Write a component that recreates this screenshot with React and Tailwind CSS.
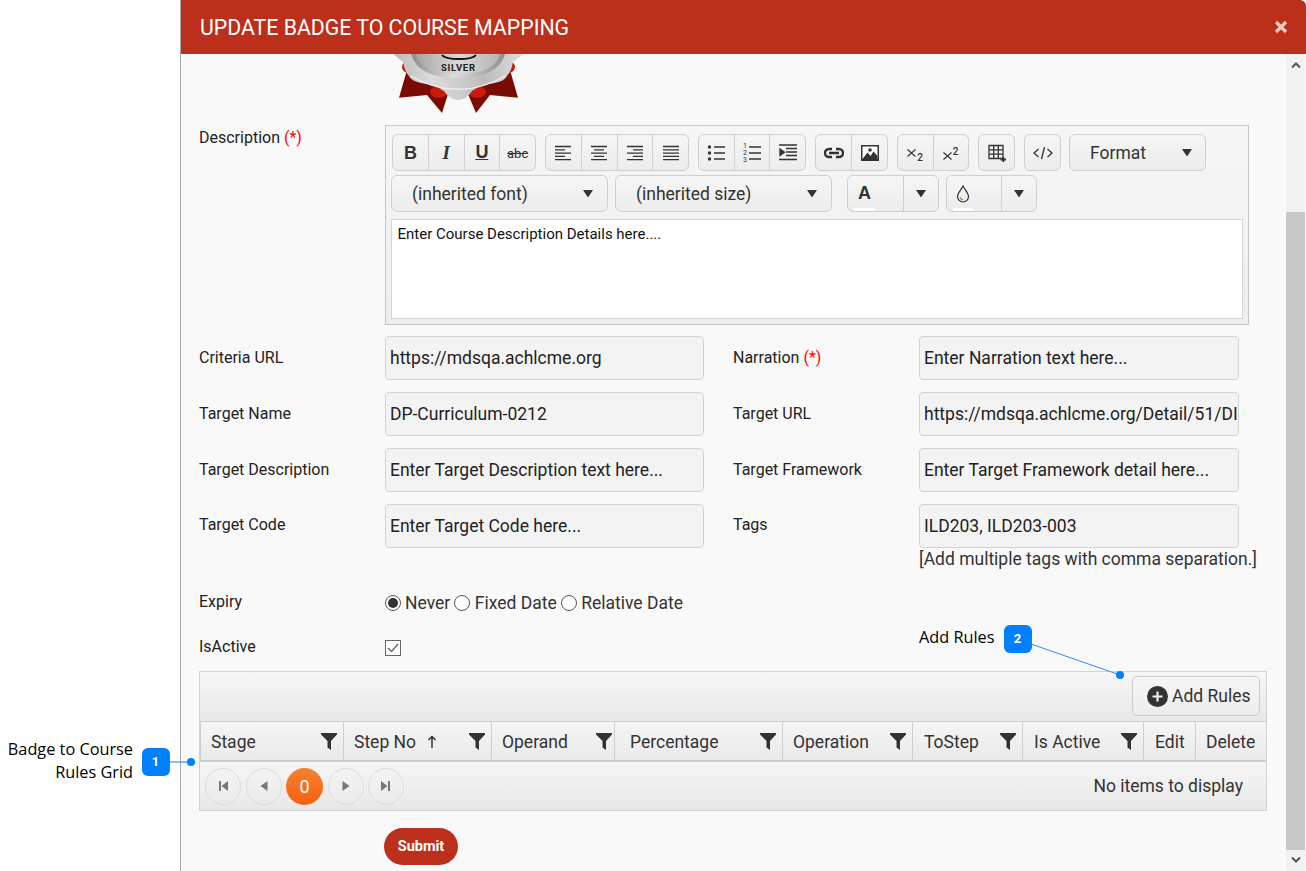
import React from "react";

const Ico = ({ children, w = 18, h = 18, vb = "0 0 18 18" }) => (
  <svg width={w} height={h} viewBox={vb} fill="none" stroke="#333" strokeWidth="1.3">{children}</svg>
);
const Lines = ({ rows }) => (
  <Ico>
    {rows.map(([a, b], i) => (
      <path key={i} d={`M${a} ${2.5 + i * 3.3}H${b}`} />
    ))}
  </Ico>
);
const Caret = ({ s = 10 }) => (
  <svg width={s} height={s * 0.75} viewBox="0 0 12 9"><path d="M0 0H12L6 9Z" fill="#333" /></svg>
);
const Funnel = () => (
  <svg width="16" height="17" viewBox="0 0 16 17"><path d="M0 0H16V1.5L10 8V17L6.5 14.5V8L0 1.5Z" fill="#333" /></svg>
);

const Btn = ({ children, last }) => (
  <div className={`flex-1 h-full flex items-center justify-center ${last ? "" : "border-r border-[#d0d0d0]"}`}>{children}</div>
);
const Group = ({ children, w }) => (
  <div className={`${w} shrink-0 flex h-[37px] rounded-[6px] border border-[#cfcfcf] bg-linear-to-b from-[#f6f6f6] to-[#ececec] overflow-hidden`}>{children}</div>
);
const Select = ({ label, w }) => (
  <div className={`${w} h-[37px] flex items-center justify-between pl-5 pr-[14px] rounded-[6px] border border-[#cfcfcf] bg-linear-to-b from-[#f6f6f6] to-[#ececec] text-[17.5px] text-[#333]`}>
    <span className="pt-[1px]">{label}</span>
    <Caret />
  </div>
);
const Field = ({ value, w = "w-[319px]" }) => (
  <div className={`${w} h-[44px] flex items-center px-1 rounded-[4px] border border-[#d2d2d2] bg-[#f4f3f3] text-[17.5px] text-[#222] overflow-hidden whitespace-nowrap`}>{value}</div>
);
const Row = ({ a, av, b, bv, pt = "pt-[12px]" }) => (
  <div className="flex items-start">
    <div className={`w-[186px] ${pt} text-[16px] leading-[20px] text-[#222]`}>{a}</div>
    <Field value={av} />
    <div className={`w-[186px] ml-[29px] ${pt} text-[16px] leading-[20px] text-[#222]`}>{b}</div>
    <Field value={bv} w="w-[320px]" />
  </div>
);
const Radio = ({ on }) => (
  <span className="w-4 h-4 rounded-full border border-[#555] bg-white flex items-center justify-center shrink-0">
    {on && <span className="w-[10px] h-[10px] rounded-full bg-[#333]" />}
  </span>
);
const Th = ({ w, label, funnel, arrow, pl = "pl-[10px]", pr = "pr-[6px]" }) => (
  <div className={`${w} h-full shrink-0 flex items-center justify-between ${pl} ${pr} border-r border-[#cdcdcd] text-[17.5px] text-[#333]`}>
    <span className="flex items-center gap-[11px] pt-[3px]">
      {label}
      {arrow && (
        <svg width="10" height="13" viewBox="0 0 10 13" fill="none" stroke="#333" strokeWidth="1.5" className="-mt-[2px]"><path d="M5 13V1.5M1.5 5L5 1.500L8.500 5" /></svg>
      )}
    </span>
    {funnel && <Funnel />}
  </div>
);
const Page = ({ d, text, orange }) => (
  <div className={`h-[37px] rounded-full flex items-center justify-center ${orange ? "bg-linear-to-b from-[#f5802f] to-[#f65f0a] text-white text-[18px] w-[37px]" : "w-[36px] border border-[#dcdcdc]"}`}>
    {text ?? <svg width="12" height="12" viewBox="0 0 12 12" fill="#777"><path d={d} /></svg>}
  </div>
);
const Callout = ({ n, cls }) => (
  <div className={`absolute w-[28px] h-[28px] rounded-[6px] bg-[#0080ff] text-white text-[13px] font-bold flex items-center justify-center ${cls}`}>{n}</div>
);

export default function App() {
  return (
    <div className="relative w-[1306px] h-[871px] overflow-hidden flex bg-white" style={{ fontFamily: '"Roboto", sans-serif' }}>
      <div className="w-[180px] shrink-0 border-r border-[#aaaaaa] box-content" />
      <div className="flex-1 flex flex-col min-w-0">
        <div className="h-[54px] shrink-0 bg-[#bc2f1b] rounded-tr-[6px] flex items-center justify-between pl-[19px] pr-[18px] text-white">
          <span className="text-[21.3px] font-normal pt-[1px]">UPDATE BADGE TO COURSE MAPPING</span>
          <svg width="14" height="14" viewBox="0 0 14 14" stroke="#f3c9c2" strokeWidth="3.200"><path d="M2 2L12 12M12 2L2 12" /></svg>
        </div>
        <div className="flex-1 flex min-h-0">
          <div className="flex-1 bg-[#f9f9f9] pl-[18px] min-w-0">
            <div className="h-[59px] ml-[186px] relative">
              <svg width="140" height="59" viewBox="385 54 140 59" className="block">
                <defs>
                  <linearGradient id="sv" x1="0" y1="0" x2="1" y2="0">
                    <stop offset="0" stopColor="#b9b9b9" />
                    <stop offset="0.3" stopColor="#dcdcdc" />
                    <stop offset="0.7" stopColor="#bdbdbd" />
                    <stop offset="1" stopColor="#dedede" />
                  </linearGradient>
                  <linearGradient id="sv2" x1="0" y1="0" x2="1" y2="0">
                    <stop offset="0" stopColor="#8c8c8c" />
                    <stop offset="0.45" stopColor="#dedede" />
                    <stop offset="1" stopColor="#8f8f8f" />
                  </linearGradient>
                  <linearGradient id="sv3" x1="0" y1="0" x2="1" y2="0">
                    <stop offset="0" stopColor="#a6a6a6" />
                    <stop offset="0.5" stopColor="#d9d9d9" />
                    <stop offset="1" stopColor="#b5b5b5" />
                  </linearGradient>
                </defs>
                <path d="M407 70L399 97.700L427 95L442 113L448 94H468L476 113L490 95L518 97.700L510 70Z" fill="#7a0a02" />
                <circle cx="407.500" cy="67" r="5.500" fill="#c91a0a" />
                <circle cx="509.500" cy="67" r="5.500" fill="#c91a0a" />
                <ellipse cx="439" cy="92" rx="9" ry="6" fill="#c91a0a" />
                <ellipse cx="477" cy="92" rx="9" ry="6" fill="#c91a0a" />
                <path d="M393 54H524L513 62Q511 72 507 76Q505 81 495 83Q480 85 472 91Q466 100 458 100Q450 100 444 91Q436 85 421 83Q411 81 409 76Q405 72 403 62Z" fill="url(#sv)" />
                <path d="M411 76Q435 90 458 89Q481 90 505 76" fill="none" stroke="#f2f2f2" strokeWidth="1.200" />
                <path d="M411 54H505Q498 78 458 78Q418 78 411 54Z" fill="url(#sv2)" />
                <path d="M416 54H500Q494 74 458 74Q422 74 416 54Z" fill="url(#sv3)" />
                <path d="M442 55Q445 59 459 59Q473 59 476 55" fill="none" stroke="#111" strokeWidth="2" />
              </svg>
              <span className="absolute left-[56px] top-[8px] text-[9.500px] font-bold leading-[12px] tracking-[0.7px] text-[#222]">SILVER</span>
            </div>

            <div className="flex mt-[12px]">
              <div className="w-[186px] pt-[3px] text-[16px] leading-[20px] text-[#222]">Description <span className="text-[#f00]">(*)</span></div>
              <div className="w-[864px] h-[200px] border border-[#c5c5c5] bg-linear-to-b from-[#f6f6f6] to-[#eeeeee] px-[5px] pt-2">
                <div className="flex items-center gap-[9px] pl-[1px] h-[37px]">
                  <Group w="w-[144px]">
                    <Btn><span className="font-bold text-[18px] mt-[2px] text-[#333]" style={{ fontFamily: '"Liberation Sans", sans-serif' }}>B</span></Btn>
                    <Btn><span className="italic font-bold text-[19px] mt-[2px] text-[#333]" style={{ fontFamily: '"Liberation Serif", serif' }}>I</span></Btn>
                    <Btn><span className="underline font-bold text-[18px] text-[#333]" style={{ fontFamily: '"Liberation Sans", sans-serif' }}>U</span></Btn>
                    <Btn last><span className="line-through text-[13px] mt-[3px] text-[#333]">abc</span></Btn>
                  </Group>
                  <Group w="w-[144px]">
                    <Btn><Lines rows={[[1, 17], [1, 11], [1, 17], [1, 11], [1, 17]]} /></Btn>
                    <Btn><Lines rows={[[1, 17], [4, 14], [1, 17], [4, 14], [1, 17]]} /></Btn>
                    <Btn><Lines rows={[[1, 17], [7, 17], [1, 17], [7, 17], [1, 17]]} /></Btn>
                    <Btn last><Lines rows={[[1, 17], [1, 17], [1, 17], [1, 17], [1, 17]]} /></Btn>
                  </Group>
                  <Group w="w-[108px]">
                    <Btn>
                      <Ico>
                        <circle cx="2.500" cy="3" r="1.700" fill="#333" stroke="none" />
                        <circle cx="2.500" cy="9" r="1.700" fill="#333" stroke="none" />
                        <circle cx="2.500" cy="15" r="1.700" fill="#333" stroke="none" />
                        <path d="M7 3H18M7 9H18M7 15H18" />
                      </Ico>
                    </Btn>
                    <Btn>
                      <div className="relative w-[18px] h-[18px]">
                        <span className="absolute left-0 top-[-2px] text-[7px] leading-[8px] text-[#333]">1</span>
                        <span className="absolute left-0 top-[5px] text-[7px] leading-[8px] text-[#333]">2</span>
                        <span className="absolute left-0 top-[12px] text-[7px] leading-[8px] text-[#333]">3</span>
                        <Ico><path d="M6 3H18M6 9H18M6 15H18" /></Ico>
                      </div>
                    </Btn>
                    <Btn last>
                      <Ico>
                        <path d="M0 1H18M7 4.500H18M7 8H18M7 11.500H18M0 15.500H18" />
                        <path d="M1 5L5.500 8.200L1 11.500Z" fill="#333" />
                      </Ico>
                    </Btn>
                  </Group>
                  <Group w="w-[73px]">
                    <Btn>
                      <svg width="20" height="12" viewBox="0 0 20 12" fill="none" stroke="#333" strokeWidth="2.400"><path d="M8 2H5a4 4 0 0 0 0 8h3M12 2h3a4 4 0 0 1 0 8h-3M5 6H15" /></svg>
                    </Btn>
                    <Btn last>
                      <svg width="18" height="16" viewBox="0 0 18 16"><path d="M0 0H18V16H0Z" fill="#333" /><path d="M1.500 1.500H16.500V14H1.500Z" fill="#fff" /><path d="M1.500 14L6.500 7.500L9.500 11L12.500 6.500L16.500 11V14Z" fill="#333" /><circle cx="9" cy="5" r="1.800" fill="#333" /></svg>
                    </Btn>
                  </Group>
                  <Group w="w-[72px]">
                    <Btn>
                      <div className="relative w-[16px] h-[14px] mt-[6px]">
                        <svg width="9" height="8" viewBox="0 0 9 8" fill="none" stroke="#333" strokeWidth="1.100" className="absolute left-0 top-0"><path d="M.5 .5L8.500 7.500M8.500 .5L.5 7.500" /></svg>
                        <span className="absolute left-[10px] top-[4px] text-[10px] leading-[10px] font-medium text-[#333]">2</span>
                      </div>
                    </Btn>
                    <Btn last>
                      <div className="relative w-[16px] h-[14px] mt-[2px]">
                        <svg width="9" height="8" viewBox="0 0 9 8" fill="none" stroke="#333" strokeWidth="1.100" className="absolute left-0 top-[5px]"><path d="M.5 .5L8.500 7.500M8.500 .5L.5 7.500" /></svg>
                        <span className="absolute left-[10px] top-0 text-[10px] leading-[10px] font-medium text-[#333]">2</span>
                      </div>
                    </Btn>
                  </Group>
                  <Group w="w-[37px]">
                    <Btn last>
                      <Ico>
                        <path d="M1 1.500H15V14.500H1ZM1 5.800H15M1 10.100H15M5.700 1.500V14.500M10.300 1.500V14.500" />
                        <path d="M12.500 15.500H18M15.300 13V18" strokeWidth="1.800" />
                      </Ico>
                    </Btn>
                  </Group>
                  <Group w="w-[37px]">
                    <Btn last>
                      <svg width="20" height="14" viewBox="0 0 20 14" fill="none" stroke="#333" strokeWidth="1.300"><path d="M5.500 3L1 7L5.500 11M14.500 3L19 7L14.500 11M11.500 1L8.500 13" /></svg>
                    </Btn>
                  </Group>
                  <div className="ml-[-1px] w-[137px] h-[37px] flex items-center justify-between pl-5 pr-[13px] rounded-[6px] border border-[#cfcfcf] bg-linear-to-b from-[#f6f6f6] to-[#ececec] text-[17.5px] text-[#333]">
                    <span className="pt-[1px]">Format</span>
                    <Caret />
                  </div>
                </div>
                <div className="flex items-center mt-1 h-[37px]">
                  <Select label="(inherited font)" w="w-[217px]" />
                  <div className="w-[7px]" />
                  <Select label="(inherited size)" w="w-[217px]" />
                  <div className="w-[15px]" />
                  <div className="flex h-[37px] w-[92px] rounded-[6px] border border-[#cfcfcf] bg-linear-to-b from-[#f6f6f6] to-[#ececec] overflow-hidden">
                    <div className="relative w-[56px] border-r border-[#cfcfcf] flex items-center pl-[10px]">
                      <span className="font-bold text-[18px] text-[#333]" style={{ fontFamily: '"Liberation Sans", sans-serif' }}>A</span>
                      <span className="absolute left-[6px] bottom-0 w-5 h-[3px] bg-white" />
                    </div>
                    <div className="flex-1 flex items-center justify-center"><Caret /></div>
                  </div>
                  <div className="w-[7px]" />
                  <div className="flex h-[37px] w-[91px] rounded-[6px] border border-[#cfcfcf] bg-linear-to-b from-[#f6f6f6] to-[#ececec] overflow-hidden">
                    <div className="relative w-[55px] border-r border-[#cfcfcf] flex items-center pl-[9px]">
                      <svg width="14" height="18" viewBox="0 0 14 18" fill="none" stroke="#333" strokeWidth="1.200"><path d="M7 1C5 5 1.500 8 1.500 11.500a5.500 5.500 0 0 0 11 0C12.500 8 9 5 7 1Z" /><path d="M4 12.500q1 2 3 2.500" stroke="#a8672a" /></svg>
                      <span className="absolute left-[6px] bottom-0 w-5 h-[3px] bg-white" />
                    </div>
                    <div className="flex-1 flex items-center justify-center"><Caret /></div>
                  </div>
                </div>
                <div className="mt-[7px] w-[852px] h-[100px] bg-white border border-[#d6d6d6] px-[5.5px] pt-[4px] text-[15px] leading-[20px] text-[#111]">Enter Course Description Details here....</div>
              </div>
            </div>

            <div className="flex flex-col gap-3 mt-[11px]">
              <Row a="Criteria URL" av="https://mdsqa.achlcme.org" b={<>Narration <span className="text-[#f00]">(*)</span></>} bv="Enter Narration text here..." />
              <Row a="Target Name" av="DP-Curriculum-0212" b="Target URL" bv="https://mdsqa.achlcme.org/Detail/51/DI" />
              <Row a="Target Description" av="Enter Target Description text here..." b="Target Framework" bv="Enter Target Framework detail here..." />
              <Row a="Target Code" av="Enter Target Code here..." b="Tags" bv="ILD203, ILD203-003" pt="pt-[11px]" />
            </div>
            <div className="ml-[720px] h-[22px] text-[17.500px] leading-[22px] text-[#333] whitespace-nowrap">[Add multiple tags with comma separation.]</div>

            <div className="flex items-center h-6 mt-[21px]">
              <div className="w-[186px] text-[16px] text-[#222] -mt-[2px]">Expiry</div>
              <div className="flex items-center text-[17.500px] text-[#333]">
                <Radio on />
                <span className="ml-1 mr-[4px]">Never</span>
                <Radio />
                <span className="ml-[4.5px] mr-[4px]">Fixed Date</span>
                <Radio />
                <span className="ml-[4.500px]">Relative Date</span>
              </div>
            </div>
            <div className="flex items-center h-6 mt-[21px]">
              <div className="w-[186px] text-[16px] text-[#222] -mt-[3px]">IsActive</div>
              <span className="w-4 h-4 border border-[#666] bg-white flex items-center justify-center">
                <svg width="12" height="10" viewBox="0 0 12 10" fill="none" stroke="#666" strokeWidth="1.400"><path d="M1 5L4.500 8.500L11 1" /></svg>
              </span>
            </div>

            <div className="mt-[11px] w-[1068px] border border-[#d3d3d3]">
              <div className="h-[49px] flex items-start justify-end pt-[4px] pr-[6px] bg-linear-to-b from-[#f6f6f6] to-[#e9e8e8]">
                <div className="w-[128px] h-[40px] flex items-center gap-[4px] pl-[14px] rounded-[5px] border border-[#cdcdcd] bg-linear-to-b from-[#f6f6f6] to-[#ececec] text-[17.500px] text-[#333]">
                  <svg width="21" height="21" viewBox="0 0 21 21"><circle cx="10.500" cy="10.500" r="10.500" fill="#333" /><path d="M10.500 5.500V15.500M5.500 10.500H15.500" stroke="#eee" strokeWidth="2.200" /></svg>
                  Add Rules
                </div>
              </div>
              <div className="h-[41px] flex border-y border-[#cdcdcd] border-b-[2px] bg-linear-to-b from-[#f5f5f5] to-[#ebeaea]">
                <div className="h-full border-l border-[#cdcdcd]" />
                <Th w="w-[143px]" label="Stage" funnel />
                <Th w="w-[148px]" label="Step No" funnel arrow />
                <Th w="w-[123px]" pr="pr-[2px]" label="Operand" funnel />
                <Th w="w-[168px]" pl="pl-[15px]" label="Percentage" funnel />
                <Th w="w-[130px]" label="Operation" funnel />
                <Th w="w-[110px]" pl="pl-[11px]" label="ToStep" funnel />
                <Th w="w-[121px]" pl="pl-[11px]" label="Is Active" funnel />
                <Th w="w-[52px]" pl="pl-[11px]" label="Edit" />
                <div className="flex-1 flex items-center pl-[10px] pt-[3px] text-[17.500px] text-[#333]">Delete</div>
              </div>
              <div className="h-[48px] flex items-center justify-between pl-[5px] pr-[23px] bg-linear-to-b from-[#f6f6f6] to-[#e9e8e8]">
                <div className="flex items-center gap-[4.5px]">
                  <Page d="M2 1H4V11H2ZM11 1V11L4.500 6Z" />
                  <Page d="M9.500 1V11L2.500 6Z" />
                  <Page text="0" orange />
                  <Page d="M2.500 1V11L9.500 6Z" />
                  <Page d="M8 1H10V11H8ZM1 1V11L7.500 6Z" />
                </div>
                <span className="text-[17.500px] text-[#333]">No items to display</span>
              </div>
            </div>

            <div className="ml-[185px] mt-[17px] w-[74px] h-[37px] rounded-full bg-[#bc2f1b] text-white text-[14.500px] font-bold flex items-center justify-center">Submit</div>
          </div>
          <div className="w-[20px] shrink-0 bg-[#f1f1f1] flex flex-col items-center justify-between border-r border-[#fafafa]">
            <div className="h-[158px] w-full relative shrink-0">
              <svg className="absolute left-[5px] top-[8px]" width="10" height="6" viewBox="0 0 10 6" fill="none" stroke="#555" strokeWidth="2"><path d="M1 5.500L5 1.500L9 5.500" /></svg>
            </div>
            <div className="flex-1 w-full bg-[#c8c8c8]" />
            <div className="h-[21px] w-full relative shrink-0">
              <svg className="absolute left-[5px] top-[7px]" width="10" height="6" viewBox="0 0 10 6" fill="none" stroke="#555" strokeWidth="2"><path d="M1 .5L5 4.500L9 .5" /></svg>
            </div>
          </div>
        </div>
      </div>

      <div className="absolute right-[1173px] top-[738px] w-[132px] text-right text-[16.3px] leading-[23px] text-black" style={{ fontFamily: '"Open Sans", sans-serif' }}>Badge to Course<br />Rules Grid</div>
      <Callout n="1" cls="left-[141.5px] top-[748px]" />
      <div className="absolute left-[919px] top-[626px] text-[16.3px] leading-[23px] text-black" style={{ fontFamily: '"Open Sans", sans-serif' }}>Add Rules</div>
      <Callout n="2" cls="left-[1003.5px] top-[625px]" />
      <svg className="absolute left-0 top-0 pointer-events-none" width="1306" height="871" fill="none">
        <path d="M170 762H191" stroke="#0080ff" strokeWidth="1" />
        <circle cx="191" cy="762" r="4" fill="#0080ff" />
        <path d="M1031 644L1120 675" stroke="#3b82f6" strokeWidth="1" />
        <circle cx="1120" cy="675" r="4" fill="#0080ff" />
      </svg>
    </div>
  );
}
